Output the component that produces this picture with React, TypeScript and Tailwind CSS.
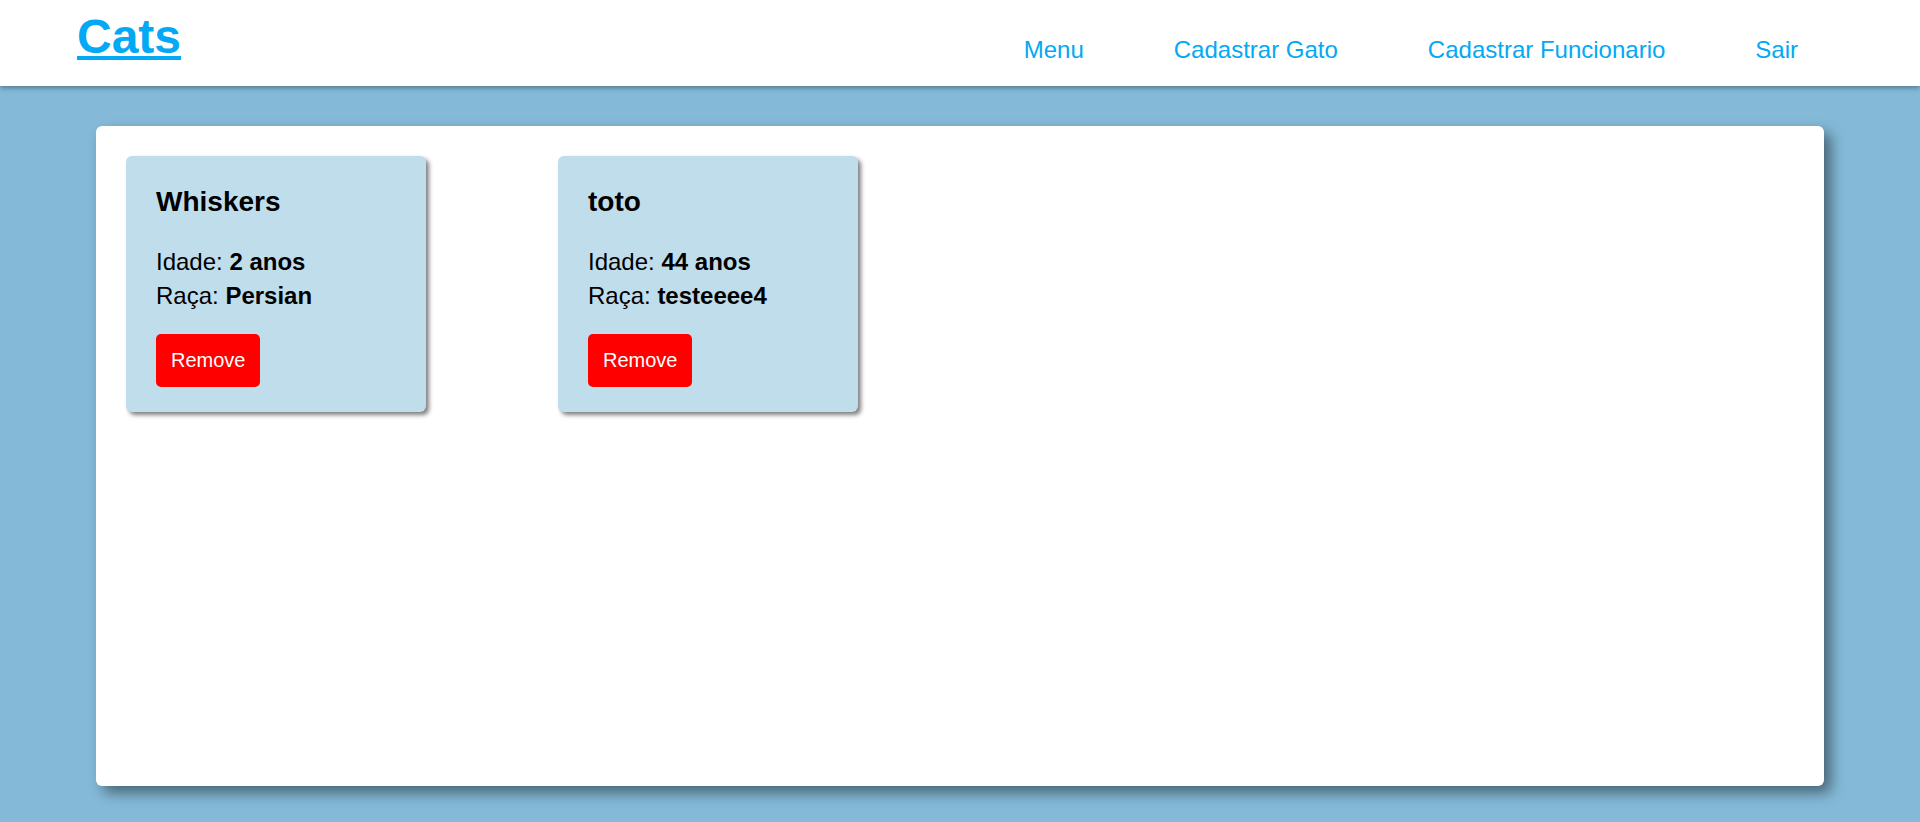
const cats = [
  { id: 1, nome: "Whiskers", idade: 2, raca: "Persian" },
  { id: 2, nome: "toto", idade: 44, raca: "testeeee4" },
];

const links = ["Menu", "Cadastrar Gato", "Cadastrar Funcionario", "Sair"];

function CatCard({ nome, idade, raca }: { nome: string; idade: number; raca: string }) {
  return (
    <div className="m-[30px] w-[300px] rounded-[6px] bg-[#c0ddeb] px-[30px] pt-[30px] pb-[25px] shadow-[3px_3px_4px_rgba(0,0,0,0.5)]">
      <h2 className="text-[28px] leading-[31px] font-bold text-black">{nome}</h2>
      <div className="mt-[28px] text-[24px] leading-[34px] text-black">
        <p>
          Idade: <strong>{idade} anos</strong>
        </p>
        <p>
          Raça: <strong>{raca}</strong>
        </p>
      </div>
      <button className="mt-[21px] rounded-[5px] bg-[#ff0000] p-[15px] text-[20px] leading-[23px] text-white">
        Remove
      </button>
    </div>
  );
}

export default function App() {
  return (
    <div className="min-h-[822px] bg-[#84bad8] font-['Liberation_Sans',Arial,sans-serif]">
      {/* Header */}
      <header className="relative z-10 flex h-[86px] items-start justify-between bg-white px-[77px] shadow-[0_2px_5px_rgba(0,0,0,0.35)]">
        <h1 className="mt-[9px] text-[48px] leading-[55px] font-bold">
          <a href="#" className="text-[#03a9f4] underline">
            Cats
          </a>
        </h1>
        <nav className="mt-[36px]">
          <ul className="flex">
            {links.map((l) => (
              <li key={l} className="px-[45px]">
                <a href="#" className="text-[24px] leading-[28px] text-[#03a9f4]">
                  {l}
                </a>
              </li>
            ))}
          </ul>
        </nav>
      </header>

      {/* Lista de gatos */}
      <main className="pt-[40px]">
        <div className="mx-auto h-[660px] w-[90%] rounded-[6px] bg-white shadow-[7px_7px_14px_rgba(0,0,0,0.45)]">
          <div className="grid grid-cols-4">
            {cats.map((c) => (
              <CatCard key={c.id} nome={c.nome} idade={c.idade} raca={c.raca} />
            ))}
          </div>
        </div>
      </main>
    </div>
  );
}
